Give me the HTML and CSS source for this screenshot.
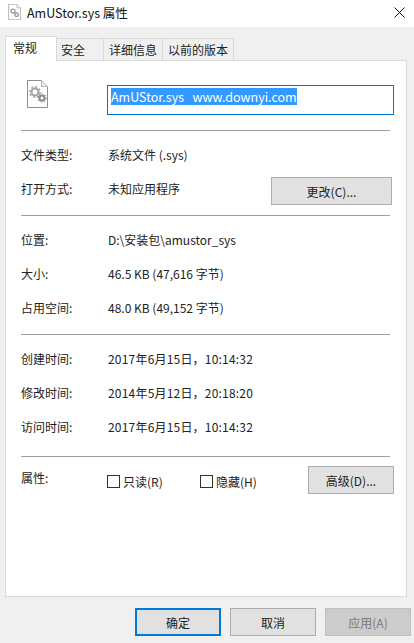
FILE: index.html
```html
<!DOCTYPE html>
<html lang="zh-CN">

<head>
    <meta charset="UTF-8">
    <meta name="viewport" content="width=device-width, initial-scale=1.0">
    <title>AmUStor.sys 属性</title>
    <link rel="stylesheet" href="styles.css">
</head>

<body>
    <div class="titlebar">
        <svg class="title-icon" width="13" height="16" viewBox="0 0 21 27">
            <path d="M.5.5h14l6 6v20H.5z" fill="#fff" stroke="#8a8a8a" />
            <path d="M14.500.5v6h6" fill="#eee" stroke="#aaa" />
            <circle cx="8" cy="12" r="3.500" fill="none" stroke="#999" stroke-width="2" />
            <circle cx="14" cy="18" r="3" fill="none" stroke="#888" stroke-width="2" />
        </svg>
        <span class="title-text">AmUStor.sys 属性</span>
        <svg class="close" width="11" height="11" viewBox="0 0 11 11">
            <path d="M.5.5l10 10M10.500.5l-10 10" stroke="#111" fill="none" />
        </svg>
    </div>

    <div class="dialog">
        <div class="tabs">
            <div class="tab active">常规</div>
            <div class="tab">安全</div>
            <div class="tab">详细信息</div>
            <div class="tab">以前的版本</div>
        </div>

        <div class="panel">
            <div class="head-row">
                <svg class="file-icon" width="21" height="28" viewBox="0 0 21 28">
                    <path d="M.5.500h14l6 6v21H.5z" fill="#fff" stroke="#8f8f8f" />
                    <path d="M14.500.500v6h6" fill="#ececec" stroke="#b5b5b5" />
                    <circle cx="8" cy="12" r="3.500" fill="none" stroke="#a3a3a3" stroke-width="2" />
                    <circle cx="8" cy="12" r="5.200" fill="none" stroke="#a3a3a3" stroke-width="1.500" stroke-dasharray="2 2" />
                    <circle cx="15" cy="18" r="2.500" fill="none" stroke="#8c8c8c" stroke-width="2" />
                    <circle cx="15" cy="18" r="4" fill="none" stroke="#8c8c8c" stroke-width="1.200" stroke-dasharray="1.500 1.500" />
                </svg>
                <div class="name-box"><span class="name-sel">AmUStor.sys&nbsp;&nbsp;&nbsp;www.downyi.com</span></div>
            </div>
            <hr class="sep sep-first">

            <div class="row"><span class="label">文件类型:</span><span>系统文件 (.sys)</span></div>
            <div class="row row-btn">
                <span class="label">打开方式:</span><span>未知应用程序</span>
                <button class="btn btn-change">更改(C)...</button>
            </div>
            <hr class="sep sep-second">

            <div class="group group-size">
                <div class="row"><span class="label">位置:</span><span>D:\安装包\amustor_sys</span></div>
                <div class="row"><span class="label">大小:</span><span>46.5 KB (47,616 字节)</span></div>
                <div class="row"><span class="label">占用空间:</span><span>48.0 KB (49,152 字节)</span></div>
            </div>
            <hr class="sep sep-third">

            <div class="group group-time">
                <div class="row"><span class="label">创建时间:</span><span class="date">2017年6月15日，10:14:32</span></div>
                <div class="row"><span class="label">修改时间:</span><span class="date">2014年5月12日，20:18:20</span></div>
                <div class="row"><span class="label">访问时间:</span><span class="date">2017年6月15日，10:14:32</span></div>
            </div>
            <hr class="sep sep-fourth">

            <div class="row row-attr">
                <span class="label">属性:</span>
                <span class="check"><i class="box"></i>只读(R)</span>
                <span class="check"><i class="box"></i>隐藏(H)</span>
                <button class="btn btn-adv">高级(D)...</button>
            </div>
        </div>

        <div class="footer">
            <button class="btn btn-main default">确定</button>
            <button class="btn btn-main">取消</button>
            <button class="btn btn-main disabled">应用(A)</button>
        </div>
    </div>
</body>

</html>
```

FILE: styles.css
```css
html,
body {
    height: 100%;
}

body {
    margin: 0;
    display: flex;
    flex-direction: column;
    overflow: hidden;
    font-family: "Noto Sans CJK SC", "Open Sans", sans-serif;
    font-size: 12px;
    color: #222;
    background: #f0f0f0;
}

.titlebar {
    display: flex;
    align-items: center;
    height: 27px;
    flex: none;
    padding: 0 9px 3px 8px;
    box-sizing: border-box;
    background: #fff;
}

.title-icon {
    margin-right: 6px;
}

.title-text {
    flex: 1;
    font-size: 12.500px;
    color: #111;
}

.dialog {
    flex: 1;
    display: flex;
    flex-direction: column;
    padding: 9px 7px 8px 5px;
}

.tabs {
    display: flex;
    height: 24px;
    align-items: flex-end;
    flex: none;
}

.tab {
    height: 22px;
    line-height: 21px;
    padding: 0 5px;
    margin-left: -1px;
    background: #f0f0f0;
    border: 1px solid #d9d9d9;
    border-bottom: 0;
    box-sizing: border-box;
}

.tab:nth-child(2) {
    padding: 0 18px 0 4px;
    margin-left: 0;
    border-left: 0;
}

.tab.active {
    line-height: 22px;
    margin-left: 0;
    padding: 0 19px 0 7px;
    background: #fff;
    position: relative;
    z-index: 1;
    margin-bottom: -1px;
    height: 25px;
}

.panel {
    flex: 1;
    background: #fff;
    border: 1px solid #d9d9d9;
    padding: 0 15px;
    display: flex;
    flex-direction: column;
}

.head-row {
    display: flex;
    align-items: flex-start;
    height: 69px;
    flex: none;
    padding-top: 18px;
    box-sizing: border-box;
}

.file-icon {
    margin-left: 6px;
    margin-top: 1px;
    flex: none;
}

.name-box {
    margin-left: 59px;
    margin-top: 6px;
    flex: none;
    width: 287px;
    height: 30px;
    box-sizing: border-box;
    border: 1px solid #0078d7;
    padding: 2px 3px;
    line-height: 17px;
}

.name-sel {
    display: inline-block;
    height: 17px;
    line-height: 17px;
    background: #3399ff;
    color: #fff;
    font-size: 12.500px;
}

.sep {
    margin: 0;
    height: 1px;
    width: 369px;
    flex: none;
    border: 0;
    background: #a0a0a0;
}

.row {
    display: flex;
    align-items: center;
    height: 34px;
    flex: none;
    padding-bottom: 2px;
    box-sizing: border-box;
}

.label {
    width: 87px;
    flex: none;
}

.date {
    letter-spacing: .2px;
}

.sep-first {
    margin-bottom: 7px;
}

.btn {
    font-family: inherit;
    font-size: 12px;
    color: #222;
    background: #e1e1e1;
    border: 1px solid #adadad;
    height: 28px;
    padding: 0;
}

.btn-change {
    width: 121px;
    margin-left: auto;
    margin-right: -1px;
    margin-top: 6px;
}

.sep-second {
    margin-top: 9px;
    margin-bottom: 7px;
}

.sep-third {
    margin-top: 9px;
    margin-bottom: 7px;
}

.sep-fourth {
    margin-top: 12px;
}

.row-attr {
    margin-top: 4px;
    height: 34px;
}

.check {
    display: flex;
    align-items: center;
    margin-top: 8px;
    width: 93px;
    flex: none;
    margin-left: -1px;
    margin-right: 1px;
}

.box {
    width: 11px;
    height: 11px;
    border: 1px solid #333;
    margin-right: 3px;
    flex: none;
}

.btn-adv {
    width: 86px;
    margin-left: auto;
    margin-right: -3px;
    margin-top: 6px;
}

.footer {
    display: flex;
    justify-content: flex-end;
    gap: 9px;
    height: 27px;
    flex: none;
    margin-top: 11px;
    margin-right: -4px;
}

.btn-main {
    width: 86px;
    height: 28px;
}

.default {
    border: 2px solid #0078d7;
}

.disabled {
    background: #cccccc;
    border-color: #bfbfbf;
    color: #7a7a7a;
}
```
